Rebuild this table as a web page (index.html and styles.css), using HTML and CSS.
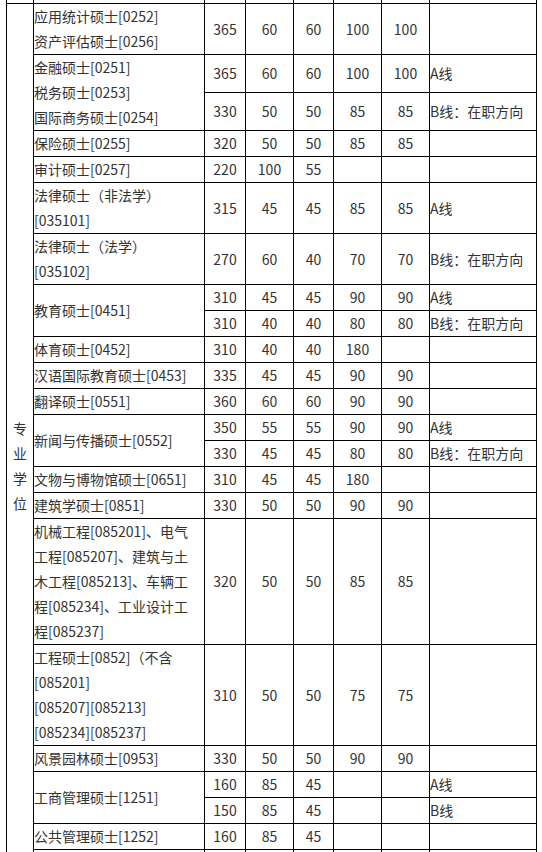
FILE: index.html
```html
<!DOCTYPE html>
<html lang="zh-CN">
<head>
<meta charset="utf-8">
<title>专业学位复试分数线</title>
<link rel="stylesheet" href="styles.css">
</head>
<body>
<table class="score">
<colgroup>
<col class="c-cat"><col class="c-name"><col class="c-total"><col class="c-s1"><col class="c-s2"><col class="c-s3"><col class="c-s4"><col class="c-note">
</colgroup>
<tbody>
<tr class="spacer"><td></td><td></td><td></td><td></td><td></td><td></td><td></td><td></td></tr>
<tr><td class="cat" rowspan="25">专<br>业<br>学<br>位</td><td class="name">应用统计硕士[0252]<br>资产评估硕士[0256]</td><td>365</td><td>60</td><td>60</td><td>100</td><td>100</td><td class="note"></td></tr>
<tr><td class="name" rowspan="2">金融硕士[0251]<br>税务硕士[0253]<br>国际商务硕士[0254]</td><td>365</td><td>60</td><td>60</td><td>100</td><td>100</td><td class="note">A线</td></tr>
<tr><td>330</td><td>50</td><td>50</td><td>85</td><td>85</td><td class="note">B线：在职方向</td></tr>
<tr><td class="name">保险硕士[0255]</td><td>320</td><td>50</td><td>50</td><td>85</td><td>85</td><td class="note"></td></tr>
<tr><td class="name">审计硕士[0257]</td><td>220</td><td>100</td><td>55</td><td></td><td></td><td class="note"></td></tr>
<tr><td class="name">法律硕士（非法学）<br>[035101]</td><td>315</td><td>45</td><td>45</td><td>85</td><td>85</td><td class="note">A线</td></tr>
<tr><td class="name">法律硕士（法学）<br>[035102]</td><td>270</td><td>60</td><td>40</td><td>70</td><td>70</td><td class="note">B线：在职方向</td></tr>
<tr><td class="name" rowspan="2">教育硕士[0451]</td><td>310</td><td>45</td><td>45</td><td>90</td><td>90</td><td class="note">A线</td></tr>
<tr><td>310</td><td>40</td><td>40</td><td>80</td><td>80</td><td class="note">B线：在职方向</td></tr>
<tr><td class="name">体育硕士[0452]</td><td>310</td><td>40</td><td>40</td><td>180</td><td></td><td class="note"></td></tr>
<tr><td class="name">汉语国际教育硕士[0453]</td><td>335</td><td>45</td><td>45</td><td>90</td><td>90</td><td class="note"></td></tr>
<tr><td class="name">翻译硕士[0551]</td><td>360</td><td>60</td><td>60</td><td>90</td><td>90</td><td class="note"></td></tr>
<tr><td class="name" rowspan="2">新闻与传播硕士[0552]</td><td>350</td><td>55</td><td>55</td><td>90</td><td>90</td><td class="note">A线</td></tr>
<tr><td>330</td><td>45</td><td>45</td><td>80</td><td>80</td><td class="note">B线：在职方向</td></tr>
<tr><td class="name">文物与博物馆硕士[0651]</td><td>310</td><td>45</td><td>45</td><td>180</td><td></td><td class="note"></td></tr>
<tr><td class="name">建筑学硕士[0851]</td><td>330</td><td>50</td><td>50</td><td>90</td><td>90</td><td class="note"></td></tr>
<tr><td class="name">机械工程[085201]、电气<br>工程[085207]、建筑与土<br>木工程[085213]、车辆工<br>程[085234]、工业设计工<br>程[085237]</td><td>320</td><td>50</td><td>50</td><td>85</td><td>85</td><td class="note"></td></tr>
<tr><td class="name">工程硕士[0852]（不含<br>[085201]<br>[085207][085213]<br>[085234][085237]</td><td>310</td><td>50</td><td>50</td><td>75</td><td>75</td><td class="note"></td></tr>
<tr><td class="name">风景园林硕士[0953]</td><td>330</td><td>50</td><td>50</td><td>90</td><td>90</td><td class="note"></td></tr>
<tr><td class="name" rowspan="2">工商管理硕士[1251]</td><td>160</td><td>85</td><td>45</td><td></td><td></td><td class="note">A线</td></tr>
<tr><td>150</td><td>85</td><td>45</td><td></td><td></td><td class="note">B线</td></tr>
<tr><td class="name">公共管理硕士[1252]</td><td>160</td><td>85</td><td>45</td><td></td><td></td><td class="note"></td></tr>
<tr class="spacer"><td></td><td></td><td></td><td></td><td></td><td></td><td></td></tr>
<tr class="spacer"><td></td><td></td><td></td><td></td><td></td><td></td><td></td></tr>
<tr class="spacer"><td></td><td></td><td></td><td></td><td></td><td></td><td></td></tr>
</tbody>
</table>
</body>
</html>
```
FILE: styles.css
```css
html, body {
  margin: 0;
  padding: 0;
  background: #fff;
}
body {
  font-family: "Noto Sans CJK SC", "Noto Sans", sans-serif;
  font-size: 14px;
  color: #333;
}
.score {
  border-collapse: collapse;
  table-layout: fixed;
  width: 530px;
  margin: -23px 0 0 6px;
}
.c-cat { width: 27px; }
.c-name { width: 171px; }
.c-total { width: 41px; }
.c-s1 { width: 48px; }
.c-s2 { width: 40px; }
.c-s3 { width: 48px; }
.c-s4 { width: 48px; }
.c-note { width: 107px; }
.score td {
  border: 1px solid #000;
  padding: 0;
  line-height: 25px;
  text-align: center;
  vertical-align: middle;
}
.score .spacer td {
  height: 25px;
}
.score td.name,
.score td.note {
  text-align: left;
}
.score td.cat {
  text-align: center;
}
```
